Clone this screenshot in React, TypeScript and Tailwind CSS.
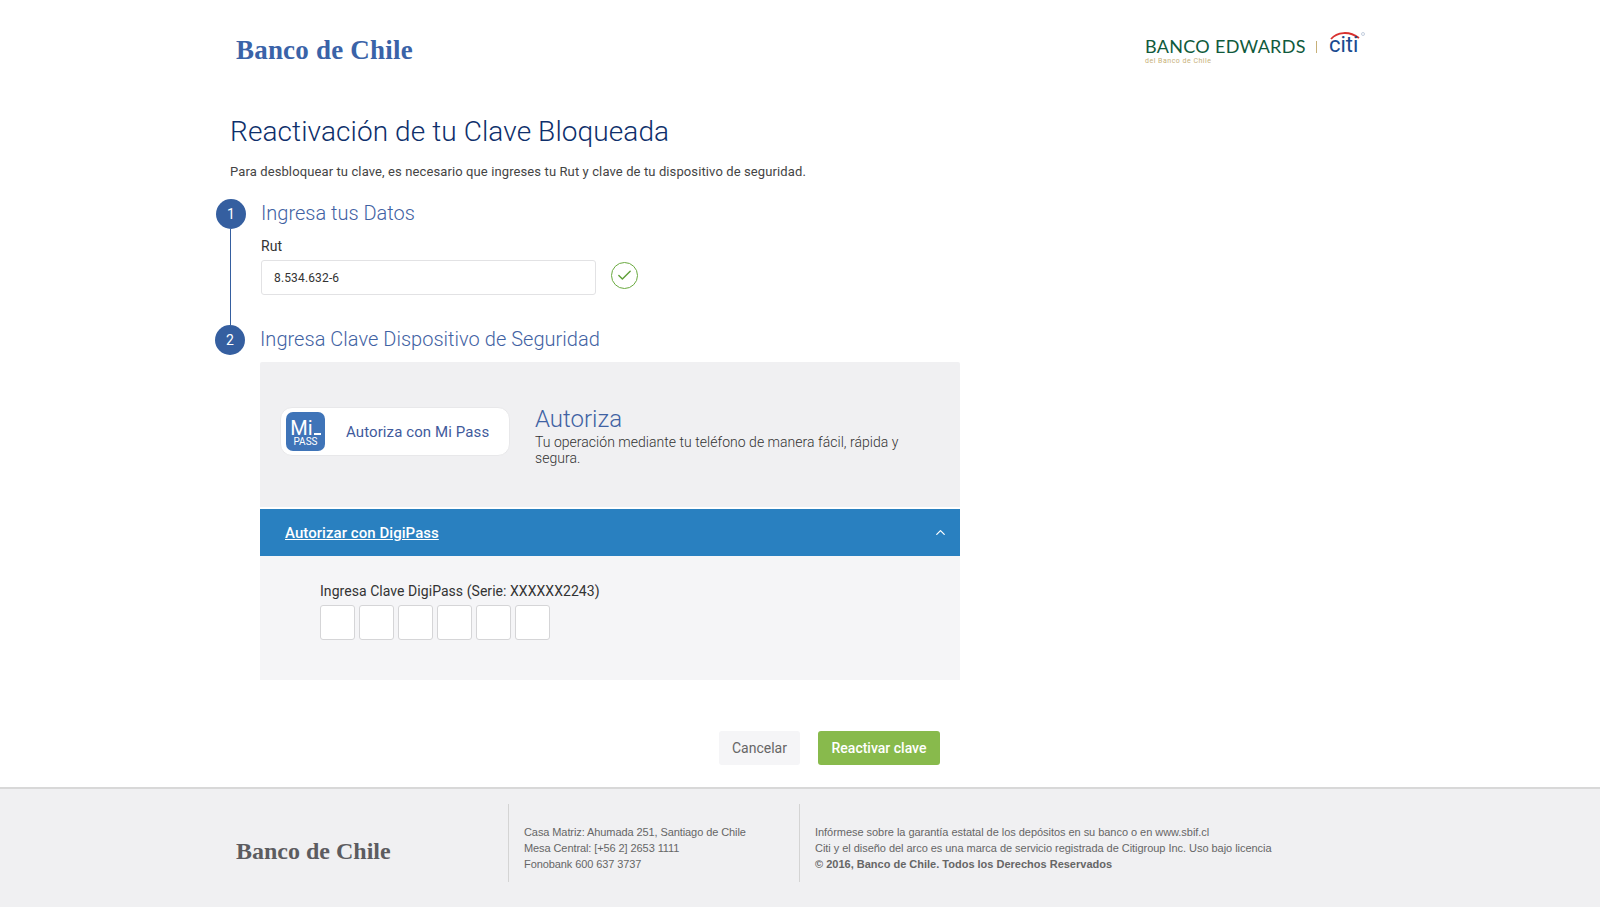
import { ChevronUp, Check } from "lucide-react"

function Logo({ className }: { className: string }) {
  return <div className={`font-['Liberation_Serif',serif] font-bold whitespace-nowrap ${className}`}>Banco de Chile</div>
}

function StepCircle({ n }: { n: number }) {
  return (
    <div className="w-[30px] h-[30px] shrink-0 rounded-full bg-[#355fa0] text-white text-[14px] flex items-center justify-center">
      {n}
    </div>
  )
}

export default function App() {
  return (
    <div className="min-h-screen flex flex-col bg-white font-['Roboto',sans-serif] text-[#333]">
      {/* Header */}
      <div className="h-[112px] pl-[236px] pr-[235px] flex justify-between">
        <Logo className="text-[27px] leading-none text-[#3a63a8] mt-[37px] tracking-[0.2px]" />
        <div className="flex items-start mt-[30px]">
          <div className="mt-[6px] w-[161px]">
            <div className="font-['Lato',sans-serif] text-[18px] leading-[20px] text-[#0f5a3c] tracking-[0.3px] whitespace-nowrap">
              BANCO EDWARDS
            </div>
            <div className="text-[7px] leading-[8px] mt-[1px] text-[#c7b078] tracking-[0.5px]">del Banco de Chile</div>
          </div>
          <div className="w-px h-[12px] bg-[#c7b078] ml-[10px] mt-[11px]" />
          <div className="relative ml-[12px] w-[36px] h-[24px]">
            <svg className="absolute left-0 top-0" width="36" height="12" viewBox="0 0 36 12" fill="none">
              <path d="M2 9 C8 2 20 0.5 30 8" stroke="#d8312f" strokeWidth="1.8" />
              <circle cx="34" cy="4" r="1.5" stroke="#9db0c9" strokeWidth="0.6" />
            </svg>
            <span className="absolute left-0 top-[3px] text-[22px] leading-[24px] text-[#1b4b90]">citi</span>
          </div>
        </div>
      </div>

      {/* Main */}
      <div className="pl-[216px]">
        <h1 className="ml-[14px] text-[28px] leading-[38px] font-light text-[#0e2f6b] mt-[1px] tracking-[0.09px]">
          Reactivación de tu Clave Bloqueada
        </h1>
        <p className="ml-[14px] mt-[12px] text-[13px] leading-[18px] tracking-[0.11px] text-[#444]">
          Para desbloquear tu clave, es necesario que ingreses tu Rut y clave de tu dispositivo de seguridad.
        </p>

        {/* Step 1 */}
        <div className="flex mt-[18px] h-[126px]">
          <div className="flex flex-col items-center w-[30px]">
            <StepCircle n={1} />
            <div className="w-px -ml-px flex-1 bg-[#355fa0]" />
          </div>
          <div className="ml-[15px]">
            <div className="text-[20px] leading-[28px] font-light text-[#3f62a3]">Ingresa tus Datos</div>
            <label className="block mt-[10px] text-[14px] leading-[18px] text-[#333] tracking-[0.05px]">Rut</label>
            <div className="flex items-center mt-[5px]">
              <div className="w-[335px] h-[35px] bg-white border border-[#e2e2e4] rounded-[3px] pl-[12px] flex items-center text-[12px] tracking-[0.15px] text-[#333]">
                8.534.632-6
              </div>
              <div className="ml-[15px] w-[27px] h-[27px] rounded-full border border-[#6aaa3f] flex items-center justify-center -mt-[4px]">
                <Check size={17} strokeWidth={2} className="text-[#5f9f38]" />
              </div>
            </div>
          </div>
        </div>

        {/* Step 2 */}
        <div className="flex -ml-px">
          <StepCircle n={2} />
          <div className="ml-[15px] w-[700px]">
            <div className="text-[20px] leading-[28px] font-light text-[#3f62a3] tracking-[0.03px]">Ingresa Clave Dispositivo de Seguridad</div>

            <div className="mt-[9px] h-[145px] bg-[#f0f0f2] rounded-t-[2px] flex items-center pl-[20px] pr-[50px] pb-[1px]">
              <div className="w-[230px] h-[49px] mb-[5px] shrink-0 bg-white border border-[#e8e8ea] rounded-[12px] flex items-center pl-[5px]">
                <div className="w-[39px] h-[39px] rounded-[7px] bg-[#3f74b8] text-white flex flex-col items-center justify-center pt-[3px]">
                  <div className="flex items-end text-[20px] leading-[16px]">
                    Mi
                    <span className="w-[7px] h-[2px] bg-white mb-[1px] ml-[1px]" />
                  </div>
                  <div className="text-[10px] leading-[10px] mt-[1px]">PASS</div>
                </div>
                <div className="ml-[21px] mt-[1px] text-[15px] text-[#3f5a9c] tracking-[0.1px] whitespace-nowrap">Autoriza con Mi Pass</div>
              </div>
              <div className="ml-[25px] mt-[3px]">
                <div className="text-[24px] leading-[26px] font-light text-[#3f62a3]">Autoriza</div>
                <div className="text-[14px] leading-[16px] font-light text-[#333] mt-[2px] tracking-[0.03px]">
                  Tu operación mediante tu teléfono de manera fácil, rápida y segura.
                </div>
              </div>
            </div>

            <div className="mt-[2px] h-[47px] bg-[#2980c0] text-white flex items-center justify-between pl-[25px] pr-[12px]">
              <a className="mt-[1px] text-[15px] font-medium underline tracking-[0.05px]">Autorizar con DigiPass</a>
              <ChevronUp size={15} strokeWidth={2} />
            </div>

            <div className="h-[124px] bg-[#f5f5f7] pl-[60px] pt-[26px]">
              <div className="text-[14px] leading-[18px] text-[#333] tracking-[0.05px]">Ingresa Clave DigiPass (Serie: XXXXXX2243)</div>
              <div className="flex gap-[4px] mt-[5px]">
                {[0, 1, 2, 3, 4, 5].map((i) => (
                  <div key={i} className="w-[35px] h-[35px] bg-white border border-[#d5d5d7] rounded-[3px]" />
                ))}
              </div>
            </div>

            <div className="flex justify-end gap-[18px] mt-[51px] pr-[20px]">
              <button className="w-[81px] h-[34px] bg-[#f5f5f7] rounded-[3px] text-[14px] text-[#666]">Cancelar</button>
              <button className="w-[122px] h-[34px] bg-[#88ba4c] rounded-[3px] text-[14px] font-medium text-white">Reactivar clave</button>
            </div>
          </div>
        </div>
      </div>

      {/* Footer */}
      <footer className="mt-[22px] flex-1 bg-[#f0f0f2] border-t-2 border-[#d8d8d8] pl-[236px] pt-[15px] flex items-start font-['Liberation_Sans',sans-serif] text-[11px] leading-[16px] text-[#666]">
        <div className="w-[272px] h-[78px] pt-[16px] flex items-center">
          <Logo className="text-[24px] text-[#5c5c60]" />
        </div>
        <div className="w-[291px] h-[78px] border-l border-[#d4d4d4] pl-[15px] pt-[20px] tracking-[-0.09px]">
          <div>Casa Matriz: Ahumada 251, Santiago de Chile</div>
          <div>Mesa Central: [+56 2] 2653 1111</div>
          <div>Fonobank 600 637 3737</div>
        </div>
        <div className="h-[78px] border-l border-[#d4d4d4] pl-[15px] pt-[20px] tracking-[-0.04px]">
          <div>Infórmese sobre la garantía estatal de los depósitos en su banco o en www.sbif.cl</div>
          <div>Citi y el diseño del arco es una marca de servicio registrada de Citigroup Inc. Uso bajo licencia</div>
          <div className="font-bold tracking-normal">© 2016, Banco de Chile. Todos los Derechos Reservados</div>
        </div>
      </footer>
    </div>
  )
}
